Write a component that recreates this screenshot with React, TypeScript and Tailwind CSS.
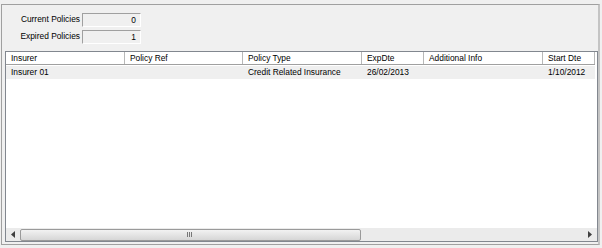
import React from 'react';

const cols = [
  { title: 'Insurer', w: 'w-[119px]' },
  { title: 'Policy Ref', w: 'w-[118px]' },
  { title: 'Policy Type', w: 'w-[119px]' },
  { title: 'ExpDte', w: 'w-[62px]' },
  { title: 'Additional Info', w: 'w-[119px]' },
  { title: 'Start Dte', w: 'flex-1' },
];

const row = ['Insurer 01', '', 'Credit Related Insurance', '26/02/2013', '', '1/10/2012'];

function CountField({ label, value }: { label: string; value: string }) {
  return (
    <div className="flex items-center h-[13px]">
      <div className="w-[80px] text-right pr-[2px] leading-none">{label}</div>
      <div className="w-[59px] h-[14px] border border-t-[#a0a0a0] border-l-[#a0a0a0] border-r-white border-b-white bg-[#f0f0f0] text-right pr-[4px] leading-[13px]">
        {value}
      </div>
    </div>
  );
}

export default function App() {
  return (
    <div
      className="w-[602px] h-[248px] bg-[#f0f0f0] pt-[4px] pl-[1px] text-[8.4px] text-black overflow-hidden"
      style={{ fontFamily: '"Liberation Sans", Arial, sans-serif' }}
    >
      <div className="w-[599px] h-[241px] border-t border-l border-[#a0a0a0] border-r-2 border-r-[#c4c4c4] border-b border-b-[#a0a0a0] flex flex-col">
        <div className="pt-[8px] flex flex-col gap-[4px]">
          <CountField label="Current Policies" value="0" />
          <CountField label="Expired Policies" value="1" />
        </div>
        <div className="mt-[8px] ml-[3px] w-[593px] h-[191px] border border-[#82878f] bg-white flex flex-col">
          <div className="flex h-[13px] border-b border-[#a0a0a0] mr-[2px]">
            {cols.map((c) => (
              <div key={c.title} className={`${c.w} border-r border-[#b8b8b8] pl-[5px] leading-[13px] whitespace-nowrap overflow-hidden`}>
                {c.title}
              </div>
            ))}
          </div>
          <div className="flex h-[13px] bg-[#efefef] mt-px mr-[2px]">
            {row.map((v, i) => (
              <div key={i} className={`${cols[i].w} pl-[5px] pr-px leading-[13px] whitespace-nowrap overflow-hidden`}>
                {v}
              </div>
            ))}
          </div>
          <div className="flex-1" />
          <div className="h-[13px] bg-[#ebebeb] flex items-center">
            <div className="w-[14px] h-full flex items-center justify-center">
              <svg width="4" height="7" viewBox="0 0 4 7">
                <path d="M4 0 L0 3.5 L4 7 Z" fill="#404040" />
              </svg>
            </div>
            <div className="w-[341px] h-[12px] rounded-[2px] border border-[#9a9a9a] bg-gradient-to-b from-[#f2f2f2] to-[#d6d6d6] flex items-center justify-center">
              <div className="flex gap-[1px] ml-[-2px]">
                <div className="w-px h-[5px] bg-[#777]" />
                <div className="w-px h-[5px] bg-[#777]" />
                <div className="w-px h-[5px] bg-[#777]" />
              </div>
            </div>
            <div className="flex-1" />
            <div className="w-[14px] h-full flex items-center justify-center">
              <svg width="4" height="7" viewBox="0 0 4 7">
                <path d="M0 0 L4 3.5 L0 7 Z" fill="#404040" />
              </svg>
            </div>
          </div>
        </div>
      </div>
    </div>
  );
}
